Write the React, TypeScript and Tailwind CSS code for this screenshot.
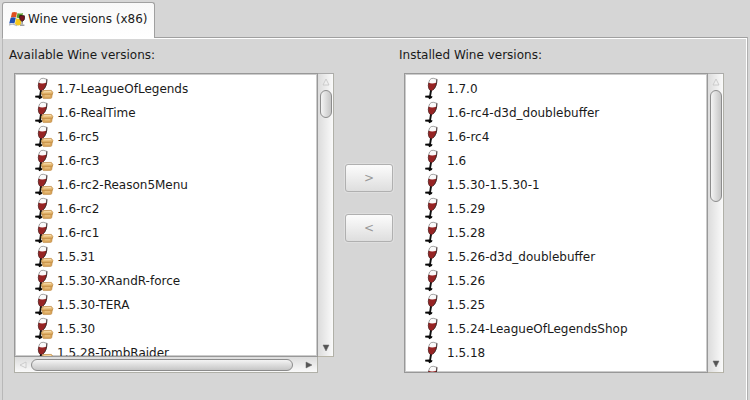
import React from "react";

const available = [
  "1.7-LeagueOfLegends",
  "1.6-RealTime",
  "1.6-rc5",
  "1.6-rc3",
  "1.6-rc2-Reason5Menu",
  "1.6-rc2",
  "1.6-rc1",
  "1.5.31",
  "1.5.30-XRandR-force",
  "1.5.30-TERA",
  "1.5.30",
  "1.5.28-TombRaider",
];

const installed = [
  "1.7.0",
  "1.6-rc4-d3d_doublebuffer",
  "1.6-rc4",
  "1.6",
  "1.5.30-1.5.30-1",
  "1.5.29",
  "1.5.28",
  "1.5.26-d3d_doublebuffer",
  "1.5.26",
  "1.5.25",
  "1.5.24-LeagueOfLegendsShop",
  "1.5.18",
  "1.5.17",
];

function WineIcon({ packaged }: { packaged: boolean }) {
  return (
    <svg width="20" height="24" viewBox="0 0 20 24" aria-hidden="true" className="shrink-0">
      <path d="M5.6 3 Q7 1 9.4 1.3 L12.9 2.3 L12.6 5.8 C12.2 9.6 10 12.8 7.2 14.2 C4.6 12.8 3.8 9.4 4.6 6 Z" fill="#fafafa" stroke="#666" strokeWidth="0.6" />
      <path d="M4.8 5.8 Q8 7.2 12.6 5.6 C12.2 9.6 10 12.8 7.2 14.2 C4.6 12.8 3.8 9.4 4.8 5.8 Z" fill="#962424" />
      <path d="M4.8 5.8 C3.8 9.4 4.6 12.8 7.2 14.2" fill="none" stroke="#551c1c" strokeWidth="0.7" />
      <path d="M12.9 2.3 L12.6 5.8 C12.2 8.6 11 11 9.2 12.8" fill="none" stroke="#2c1515" strokeWidth="0.8" />
      <path d="M7 13.4 L6 19.6" stroke="#111" strokeWidth="1.9" />
      <path d="M1.2 18.8 L5 18.4 L8.6 19.6 L7.8 21 L5.2 22.2 L4.4 20.8 L1.2 20.4 Z" fill="#080808" />
      {packaged && (
        <g>
          <path d="M8 16.6 L18.4 16.6 L17.8 20.4 Q17.6 21.4 16.6 21.4 L10 21.6 Q8.8 21.6 8.5 20.6 Z" fill="#d9a65c" stroke="#b27b31" strokeWidth="0.5" />
          <path d="M9 13.6 L17.4 13.4 L18.9 15.4 L18.4 17.2 L7.9 17.4 L7.4 15.6 Z" fill="#e3b46c" stroke="#b98237" strokeWidth="0.6" />
          <path d="M9.8 14.3 L16.8 14.1 L17.7 15.3 L9 15.5 Z" fill="#f6dba8" />
          <path d="M10.6 18.9 H16" stroke="#efc98a" strokeWidth="1" />
        </g>
      )}
    </svg>
  );
}

function TabIcon() {
  return (
    <svg width="16" height="16" viewBox="0 0 16 16" aria-hidden="true" className="shrink-0">
      <path d="M3 1.6 Q5 .2 8 1.6 L7 6.6 Q4.2 5.4 1.8 6.8 Z" fill="#df4f1e" />
      <path d="M8.6 2 Q10.8 3.2 14 2 L13 6.8 Q9.8 8 7.5 6.6 Z" fill="#5ba02e" />
      <path d="M1.6 7 Q4.2 5.6 6.8 7 L5.4 12.6 Q3 11.2 .2 12.6 Z" fill="#2050b4" />
      <path d="M7 7.3 Q9.6 8.6 12.2 7.6 L12 13.4 Q8.6 15.8 6 13 Z" fill="#f6c81c" />
      <path d="M0 14 Q4 12 8 14.8" stroke="#bbb" strokeWidth="1.4" fill="none" />
      <path d="M10.8 4.4 L15.4 4.8 Q16.4 9 13.4 10.6 Q9.8 9 10.8 4.4 Z" fill="#7a141e" stroke="#2b1014" strokeWidth="0.8" />
      <path d="M13.2 10 L13 13.5" stroke="#555" strokeWidth="0.9" />
      <path d="M11 14.2 H15.4" stroke="#888" strokeWidth="1.2" />
    </svg>
  );
}

type Direction = "up" | "down" | "left" | "right";

const arrowShapes: Record<Direction, string> = {
  up: "M4 1 L7 7 H1 Z",
  down: "M1 1 H7 L4 7 Z",
  left: "M1 4 L7 1 V7 Z",
  right: "M1 1 L7 4 L1 7 Z",
};

function Arrow({ direction, disabled = false }: { direction: Direction; disabled?: boolean }) {
  return (
    <button
      type="button"
      aria-label={`Scroll ${direction}`}
      disabled={disabled}
      className="flex size-4 shrink-0 items-center justify-center"
    >
      <svg width="8" height="8" viewBox="0 0 8 8">
        <path
          d={arrowShapes[direction]}
          fill={disabled ? "#efefef" : "#555"}
          stroke={disabled ? "#c4c4c4" : "#666"}
          strokeWidth={disabled ? 0.8 : 0.5}
        />
      </svg>
    </button>
  );
}

function VerticalBar({ short = false }: { short?: boolean }) {
  return (
    <div className="flex w-4 shrink-0 flex-col items-center border-t border-r border-b border-t-[#aaa] border-r-[#b0b0a8] border-b-[#b8b5a8] bg-linear-to-r from-[#dcdcdc] to-[#fafafa]">
      <Arrow direction="up" disabled />
      <div className="flex min-h-0 w-3 flex-1 flex-col">
        <div
          className={`${short ? "h-[11%]" : "h-[42%]"} w-full shrink-0 rounded-full border border-[#8c8c8c] bg-linear-to-r from-[#f4f4f4] to-[#c6c6c6]`}
        />
      </div>
      <Arrow direction="down" />
    </div>
  );
}

function HorizontalBar() {
  return (
    <div className="mr-4 flex h-4 shrink-0 items-center border-r border-b border-l border-[#b0b0a8] bg-linear-to-b from-[#dcdcdc] to-[#fafafa]">
      <Arrow direction="left" disabled />
      <div className="h-3 flex-1">
        <div className="h-full w-[97%] rounded-full border border-[#8c8c8c] bg-linear-to-b from-[#f4f4f4] to-[#c6c6c6]" />
      </div>
      <Arrow direction="right" />
    </div>
  );
}

function VersionPanel({ title, versions, packaged = false }: { title: string; versions: string[]; packaged?: boolean }) {
  return (
    <section className="flex min-h-0 min-w-0 flex-1 flex-col">
      <h2 className="mb-2 h-5 leading-5">{title}</h2>
      <div className="ml-[5px] flex min-h-0 flex-1 flex-col">
        <div className="flex min-h-0 flex-1">
          <ul
            aria-label={title}
            className="min-w-0 flex-1 overflow-hidden border border-[#989898] bg-white pt-[3px] shadow-[inset_0_0_0_1px_#cccccc]"
          >
            {versions.map((version) => (
              <li key={version} className="flex h-6 items-center gap-[3px] pl-[19px] leading-6 whitespace-nowrap">
                <WineIcon packaged={packaged} />
                <span>{version}</span>
              </li>
            ))}
          </ul>
          <VerticalBar short={packaged} />
        </div>
        {packaged && <HorizontalBar />}
      </div>
    </section>
  );
}

function MoveButton({ label, children }: { label: string; children: React.ReactNode }) {
  return (
    <button
      type="button"
      disabled
      aria-label={label}
      className="h-7 w-12 rounded-[3px] border border-[#b0b0b0] bg-linear-to-b from-[#fcfcfc] to-[#dedede] leading-6 text-[#999] shadow-[0_0_0_1px_#dedede]"
    >
      {children}
    </button>
  );
}

export default function App() {
  return (
    <div className="flex h-screen flex-col bg-[#d6d6d6] pt-[2px] pr-[2px] pl-[2px] font-['DejaVu_Sans',sans-serif] text-[12px] text-[#1a1a1a]">
      <div role="tablist" className="z-10 flex h-[35px] shrink-0">
        <button
          type="button"
          role="tab"
          aria-selected="true"
          className="-mb-px flex items-center gap-[3px] rounded-t-[3px] border border-b-0 border-[#a0a0a0] bg-linear-to-b from-[#f8f8f8] to-white px-[6px] pb-1"
        >
          <TabIcon />
          Wine versions (x86)
        </button>
      </div>
      <main className="flex min-h-0 flex-1 border-t border-r border-l border-t-[#a0a0a0] border-r-[#b0b0b0] border-l-[#b8b8b8]">
        <div className="flex min-h-0 min-w-0 flex-1 border-t border-r border-white pt-[6px] pr-[22px] pb-[27px] pl-[6px]">
          <VersionPanel title="Available Wine versions:" versions={available} packaged />
          <div className="flex shrink-0 flex-col gap-[22px] pt-[119px] pr-[6px] pl-[11px]">
            <MoveButton label="Install selected version">&gt;</MoveButton>
            <MoveButton label="Remove selected version">&lt;</MoveButton>
          </div>
          <VersionPanel title="Installed Wine versions:" versions={installed} />
        </div>
      </main>
    </div>
  );
}
